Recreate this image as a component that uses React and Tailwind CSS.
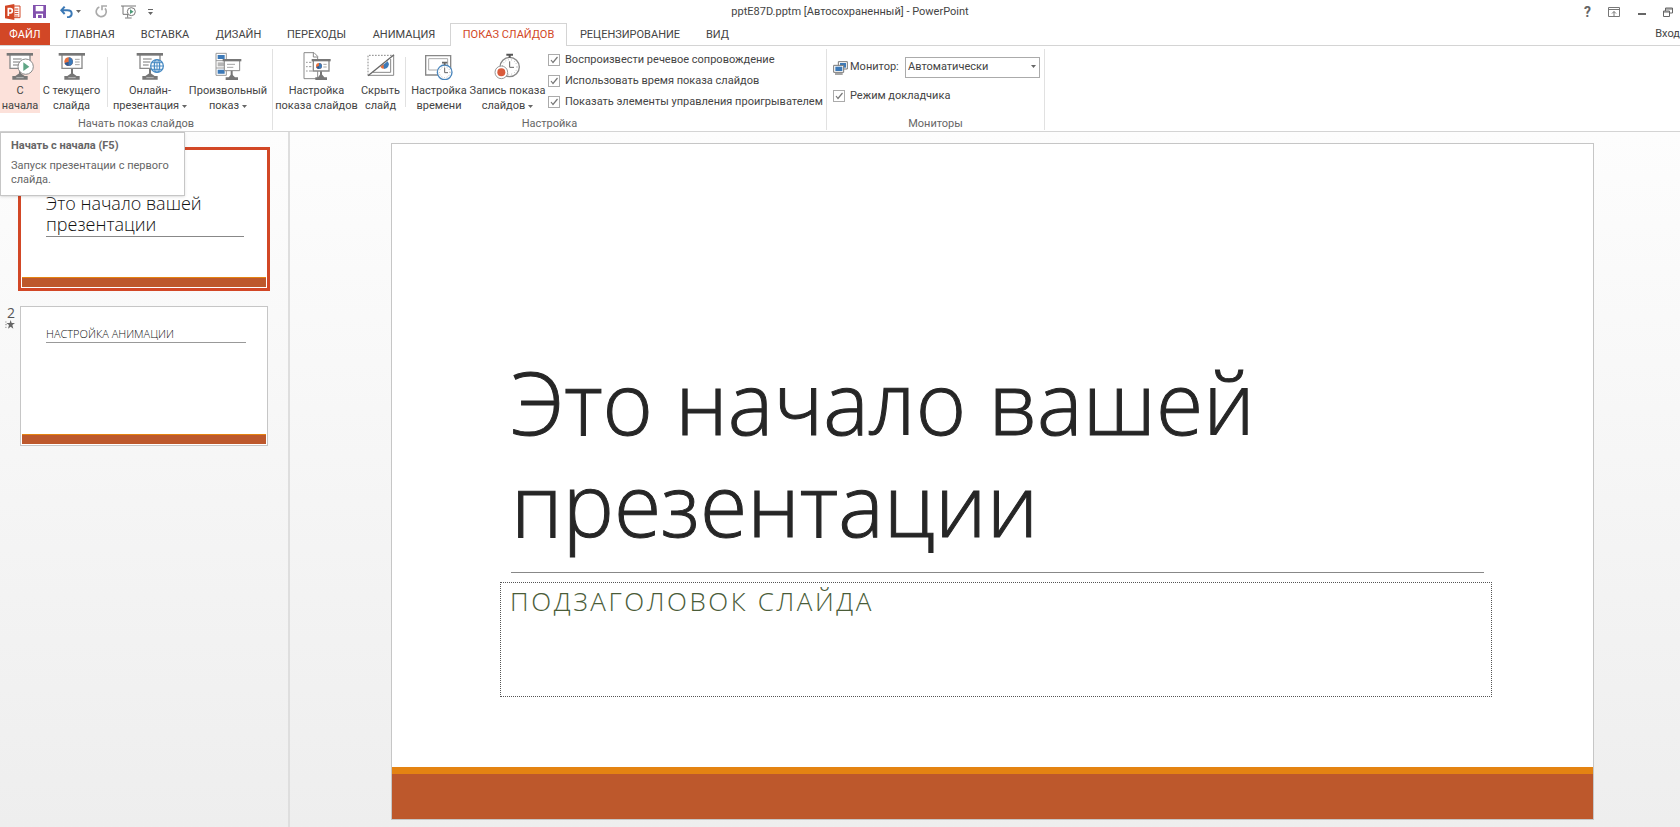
const tabs = [
  { label: "ГЛАВНАЯ", width: "w-[76px]" },
  { label: "ВСТАВКА", width: "w-[74px]" },
  { label: "ДИЗАЙН", width: "w-[73px]" },
  { label: "ПЕРЕХОДЫ", width: "w-[83px]" },
  { label: "АНИМАЦИЯ", width: "w-[92px]" },
  { label: "ПОКАЗ СЛАЙДОВ", width: "w-[117px]", active: true },
  { label: "РЕЦЕНЗИРОВАНИЕ", width: "w-[126px]" },
  { label: "ВИД", width: "w-[49px]" },
]

const playbackOptions = [
  "Воспроизвести речевое сопровождение",
  "Использовать время показа слайдов",
  "Показать элементы управления проигрывателем",
]

function Icon({ children }) {
  return (
    <svg viewBox="0 0 84 84" className="size-7 shrink-0" fill="none" aria-hidden="true">
      {children}
    </svg>
  )
}

// Projector screen on a stand
function Screen() {
  return (
    <>
      <path d="M42 50V72" stroke="#777" strokeWidth="6" />
      <path d="M42 62L56 72H65V83H19V72H28Z" fill="#777" />
      <path d="M31 77H53" stroke="#ddd" strokeWidth="2" />
      <path d="M12 9V49H72V9" fill="#fff" stroke="#8a8a8a" strokeWidth="4" />
      <path d="M2 3H81V11H2Z" fill="#777" />
    </>
  )
}

function TextLines() {
  return <path d="M21 21H47M21 30H43M21 39H38" stroke="#a5a5a5" strokeWidth="4" />
}

function PieChart({ x, y, r }) {
  return (
    <g transform={`translate(${x} ${y}) scale(${r})`}>
      <circle r="1" fill="#e8703a" />
      <path d="M0 0V-1A1 1 0 0 1 0 1Z" fill="#3d7ab8" />
      <path d="M0 0V1A1 1 0 0 1 -.95 .3Z" fill="#2a5b96" />
    </g>
  )
}

function FromStartIcon() {
  return (
    <Icon>
      <Screen />
      <TextLines />
      <circle cx="59" cy="44" r="23" fill="#fff" stroke="#8a8a8a" strokeWidth="3" />
      <path d="M52 31L70 44L52 57Z" fill="#5fa585" />
    </Icon>
  )
}

function FromCurrentIcon() {
  return (
    <Icon>
      <Screen />
      <PieChart x={32} y={29} r={13} />
      <path d="M51 22H65M51 30H65M51 38H65" stroke="#a5a5a5" strokeWidth="3" />
    </Icon>
  )
}

function OnlineIcon() {
  return (
    <Icon>
      <Screen />
      <TextLines />
      <g fill="#fff" stroke="#4a8cc4" strokeWidth="4">
        <circle cx="63" cy="42" r="19" />
        <ellipse cx="63" cy="42" rx="8" ry="19" />
        <path d="M44 42H82M63 23V61M48 32H78M48 52H78" strokeWidth="3" />
      </g>
    </Icon>
  )
}

function CustomShowIcon() {
  return (
    <Icon>
      <path d="M6 4H37V70H6Z" fill="#fff" stroke="#999" strokeWidth="3" />
      <path d="M6 26H37M6 48H37" stroke="#999" strokeWidth="3" />
      <path d="M11 9H32V21H11ZM11 53H32V65H11Z" fill="#3d7ab8" />
      <path d="M11 31H32V43H11Z" fill="#b5b5b5" />
      <path d="M53 54V78" stroke="#777" strokeWidth="6" />
      <path d="M53 66L63 76H72V84H35V76H44Z" fill="#777" />
      <path d="M31 26V56H77V26" fill="#fff" stroke="#8a8a8a" strokeWidth="3" />
      <path d="M26 21H82V28H26Z" fill="#777" />
      <path d="M39 37H63M39 46H58" stroke="#a5a5a5" strokeWidth="3" />
    </Icon>
  )
}

function SetupIcon() {
  return (
    <Icon>
      <path d="M3 2H33L44 13V80H3Z" fill="#fff" stroke="#8a8a8a" strokeWidth="3" />
      <path d="M31 2V15H44" stroke="#8a8a8a" strokeWidth="3" />
      <path d="M9 31H14M9 44H14M9 57H14M18 31H25M18 44H25M18 57H29" stroke="#999" strokeWidth="3" />
      <path d="M54 56V76" stroke="#777" strokeWidth="6" />
      <path d="M54 64L64 76H72V84H37V76H45Z" fill="#777" />
      <path d="M31 26V57H78V26" fill="#fff" stroke="#8a8a8a" strokeWidth="4" />
      <path d="M26 21H83V28H26Z" fill="#777" />
      <PieChart x={48} y={42} r={9} />
      <path d="M61 37H71M61 45H71" stroke="#a5a5a5" strokeWidth="3" />
    </Icon>
  )
}

function HideSlideIcon() {
  return (
    <Icon>
      <path d="M3 70V10H78" stroke="#888" strokeWidth="3" strokeDasharray="5 4" />
      <path d="M80 10V70H4" stroke="#888" strokeWidth="3" />
      <path d="M71 21V61H18" stroke="#888" strokeWidth="3" />
      <path d="M44 42L62 28A14 14 0 0 1 52 51Z" fill="#3d7ab8" />
      <path d="M40 44L50 37V51Q43 50 40 44Z" fill="#e8703a" />
      <path d="M3 71L81 8" stroke="#666" strokeWidth="4" />
    </Icon>
  )
}

function TimingIcon() {
  return (
    <Icon>
      <path d="M2 11H77V69H2Z" fill="#fff" stroke="#888" strokeWidth="4" />
      <path d="M11 20H68V54H11Z" stroke="#aaa" strokeWidth="3" />
      <circle cx="59" cy="61" r="22" fill="#fff" stroke="#4a86bd" strokeWidth="4" />
      <circle cx="59" cy="61" r="16" stroke="#999" strokeWidth="3" strokeDasharray="2 6" />
      <path d="M59 47V62H69" stroke="#666" strokeWidth="3" />
      <path d="M51 32H67M59 32V40" stroke="#666" strokeWidth="5" />
    </Icon>
  )
}

function RecordIcon() {
  return (
    <Icon>
      <circle cx="47" cy="45" r="29" fill="#fff" stroke="#888" strokeWidth="4" />
      <circle cx="47" cy="45" r="22" stroke="#999" strokeWidth="3" strokeDasharray="2 7" />
      <path d="M47 28V46H60" stroke="#666" strokeWidth="3" />
      <path d="M37 8H57M47 8V17" stroke="#555" strokeWidth="6" />
      <circle cx="22" cy="61" r="19" fill="#fff" stroke="#999" strokeWidth="3" />
      <circle cx="22" cy="61" r="12" fill="#d95b3c" />
    </Icon>
  )
}

function Caret() {
  return (
    <svg viewBox="0 0 5 3" className="ml-[3px] inline-block h-[3px] w-[5px] align-middle" aria-hidden="true">
      <path d="M0 0H5L2.5 3Z" fill="#666" />
    </svg>
  )
}

function RibbonButton({ icon, lines, width, menu, active }) {
  return (
    <button
      type="button"
      className={`flex h-16 shrink-0 flex-col items-center whitespace-nowrap pt-[3px] text-center text-[11px] leading-[15px] ${width} ${active ? "bg-[#fce1da]" : ""}`}
    >
      {icon}
      <span className="mt-[3px]">
        {lines[0]}
        <br />
        {lines[1]}
        {menu && <Caret />}
      </span>
    </button>
  )
}

function Separator() {
  return <div className="mx-1 mt-2 h-[50px] w-px shrink-0 bg-[#e1e1e1]" />
}

function RibbonGroup({ title, width, children }) {
  return (
    <section className={`flex shrink-0 flex-col border-r border-[#e1e1e1] ${width}`}>
      <div className="flex h-16">{children}</div>
      <h2 className="mt-1 text-center text-[11px] leading-[13px] text-[#666]">{title}</h2>
    </section>
  )
}

function CheckBox({ label }) {
  return (
    <label className="flex items-center gap-[5px] whitespace-nowrap text-[11px] leading-[21px]">
      <span className="grid">
        <input
          type="checkbox"
          defaultChecked
          className="peer col-start-1 row-start-1 size-3 appearance-none border border-[#ababab] bg-white"
        />
        <svg viewBox="0 0 12 12" className="pointer-events-none invisible col-start-1 row-start-1 size-3 peer-checked:visible" aria-hidden="true">
          <path d="M3 6L5 8.5L9.5 3" fill="none" stroke="#777" strokeWidth="1.2" />
        </svg>
      </span>
      {label}
    </label>
  )
}

function TitleBar() {
  return (
    <header className="flex h-[23px] items-center">
      <div className="flex w-40 shrink-0 items-center pl-[5px]">
        <svg viewBox="0 0 48 48" className="size-4" aria-hidden="true">
          <path d="M26 6H45V41H26Z" fill="#fff" stroke="#d24726" strokeWidth="3" />
          <path d="M29 15H40M29 22H40M29 29H40M29 36H40" stroke="#d24726" strokeWidth="3" />
          <path d="M0 5L28 0V48L0 43Z" fill="#d24726" />
          <path d="M10 36V14H16Q22 14 22 20T16 27H10" fill="none" stroke="#fff" strokeWidth="5" />
        </svg>
        <button type="button" aria-label="Сохранить" className="ml-3">
          <svg viewBox="0 0 39 39" className="size-[13px]">
            <path d="M0 0H39V39H0Z" fill="#8251ad" />
            <path d="M8 3H31V19H8ZM9 26H30V39H26V30H15V39H9Z" fill="#fff" />
          </svg>
        </button>
        <button type="button" aria-label="Отменить" className="ml-[14px] flex items-center">
          <svg viewBox="0 0 39 36" className="h-3 w-[13px]" fill="none" stroke="#3b78b5" strokeWidth="6">
            <path d="M14 2L4 13L14 24M4 13H22Q35 13 35 23T21 34" />
          </svg>
          <Caret />
        </button>
        <button type="button" aria-label="Повторить" className="ml-[14px]">
          <svg viewBox="0 0 39 39" className="size-[13px]" fill="none" stroke="#aaa" strokeWidth="5">
            <path d="M13 6A15 15 0 1 0 30 10M21 16V3H36" />
          </svg>
        </button>
        <button type="button" aria-label="Показ слайдов с начала" className="ml-[13px]">
          <svg viewBox="0 0 45 42" className="h-[14px] w-[15px]" fill="none">
            <path d="M0 3H45M6 3V28H22M20 28V38M12 39H32" stroke="#777" strokeWidth="3" />
            <circle cx="31" cy="20" r="12" fill="#fff" stroke="#777" strokeWidth="3" />
            <path d="M27 13L38 20L27 27Z" fill="#4c9a78" />
          </svg>
        </button>
        <button type="button" aria-label="Настройка панели" className="ml-3">
          <svg viewBox="0 0 5 6" className="h-[6px] w-[5px]">
            <path d="M0 0H5V1H0ZM0 3H5L2.5 6Z" fill="#666" />
          </svg>
        </button>
      </div>
      <h1 className="min-w-0 flex-1 truncate text-center text-[11px] leading-4">
        pptE87D.pptm [Автосохраненный] - PowerPoint
      </h1>
      <div className="flex w-[140px] shrink-0 items-center justify-between pl-11 pr-[7px] text-[#666]">
        <button type="button" className="text-sm font-bold leading-4">?</button>
        <button type="button" aria-label="Параметры ленты">
          <svg viewBox="0 0 12 10" className="h-[10px] w-3" fill="none" stroke="#777">
            <path d="M.5 .5H11.5V9.5H.5ZM.5 2.5H11.5M6 9V4.5M4 6.5L6 4.5L8 6.5" />
          </svg>
        </button>
        <button type="button" aria-label="Свернуть">
          <svg viewBox="0 0 8 8" className="size-2"><path d="M0 5H8V7H0Z" fill="#666" /></svg>
        </button>
        <button type="button" aria-label="Восстановить">
          <svg viewBox="0 0 10 10" className="size-[10px]" fill="none" stroke="#666">
            <path d="M.5 4H6.5V9.5H.5ZM.5 5H6.5M2.5 4V1H9.5V6H7M2.5 2H9.5" />
          </svg>
        </button>
      </div>
    </header>
  )
}

function Tabs() {
  return (
    <nav className="flex h-[23px] items-stretch border-b border-[#d4d4d4] text-[11px] leading-[22px]">
      <button type="button" className="w-[50px] shrink-0 bg-[#d24726] pt-px text-center text-white">ФАЙЛ</button>
      <div className="ml-[2px] flex flex-1">
        {tabs.map((tab) => (
          <button
            key={tab.label}
            type="button"
            className={`shrink-0 whitespace-nowrap text-center ${tab.width} ${tab.active ? "-mb-px border border-b-0 border-[#d4d4d4] bg-white text-[#d24726]" : "pt-px"}`}
          >
            {tab.label}
          </button>
        ))}
      </div>
      <a href="#login">Вход</a>
    </nav>
  )
}

function Ribbon() {
  return (
    <div className="flex border-b border-[#d4d4d4] pb-px pt-[3px]">
      <RibbonGroup title="Начать показ слайдов" width="w-[273px]">
        <RibbonButton active width="w-10" icon={<FromStartIcon />} lines={["С", "начала"]} />
        <RibbonButton width="w-[63px]" icon={<FromCurrentIcon />} lines={["С текущего", "слайда"]} />
        <Separator />
        <RibbonButton menu width="w-[76px]" icon={<OnlineIcon />} lines={["Онлайн-", "презентация"]} />
        <RibbonButton menu width="w-[80px]" icon={<CustomShowIcon />} lines={["Произвольный", "показ"]} />
      </RibbonGroup>
      <RibbonGroup title="Настройка" width="w-[554px]">
        <RibbonButton width="w-[87px]" icon={<SetupIcon />} lines={["Настройка", "показа слайдов"]} />
        <RibbonButton width="w-[41px]" icon={<HideSlideIcon />} lines={["Скрыть", "слайд"]} />
        <Separator />
        <RibbonButton width="w-[58px]" icon={<TimingIcon />} lines={["Настройка", "времени"]} />
        <RibbonButton menu width="w-[79px]" icon={<RecordIcon />} lines={["Запись показа", "слайдов"]} />
        <div className="ml-[1px]">
          {playbackOptions.map((option) => (
            <CheckBox key={option} label={option} />
          ))}
        </div>
      </RibbonGroup>
      <RibbonGroup title="Мониторы" width="w-[218px]">
        <div className="flex flex-1 flex-col gap-[7px] pl-[6px] pr-1 pt-2">
          <div className="flex items-center text-[11px]">
            <svg viewBox="0 0 45 42" className="h-[14px] w-[15px] shrink-0" fill="none" aria-hidden="true">
              <path d="M16 2H43V24H16Z" fill="#fff" stroke="#777" strokeWidth="3" />
              <path d="M21 6H39V20H21Z" fill="#3d7ab8" />
              <path d="M2 13H32V34H2Z" fill="#fff" stroke="#777" strokeWidth="3" />
              <path d="M7 17H28V30H7Z" fill="#3d7ab8" />
              <path d="M6 39H29" stroke="#777" strokeWidth="4" />
            </svg>
            <label htmlFor="monitor" className="ml-[2px] w-[55px]">Монитор:</label>
            <div className="relative flex-1">
              <select id="monitor" className="block h-[21px] w-full appearance-none border border-[#ababab] bg-white pl-[2px] text-[11px]">
                <option>Автоматически</option>
              </select>
              <span className="pointer-events-none absolute right-1 top-0 leading-[18px]">
                <Caret />
              </span>
            </div>
          </div>
          <CheckBox label="Режим докладчика" />
        </div>
      </RibbonGroup>
    </div>
  )
}

function SlidePane() {
  return (
    <aside className="w-[290px] shrink-0 border-r-2 border-[#dedede] pt-[15px] font-['Open_Sans','Noto_Sans',sans-serif]">
      <div className="flex pl-[18px]">
        <button type="button" className="flex h-[144px] w-[252px] flex-col border-3 border-[#d24726] bg-white p-px text-left font-light">
          <span className="mt-[42px] w-full pl-6 text-lg leading-[21px] text-[#111]">
            Это начало вашей
            <br />
            презентации
          </span>
          <span className="ml-6 mr-[22px] mt-px h-px self-stretch bg-[#888]" />
          <span className="mt-auto h-[10px] self-stretch border-t border-[#e48312] bg-[#bd582c]" />
        </button>
      </div>
      <div className="mt-[15px] flex">
        <div className="flex w-5 flex-col items-end pr-[5px] text-[#555]">
          <span className="text-sm leading-[14px]">2</span>
          <svg viewBox="0 0 30 27" className="h-[9px] w-[10px]" aria-hidden="true">
            <path d="M17 0L20 9H30L22 15L25 26L17 20L9 26L12 15L4 9H14Z" fill="#666" />
            <path d="M0 6H5M0 14H6M0 22H5" stroke="#888" strokeWidth="2" />
          </svg>
        </div>
        <button type="button" className="flex h-[140px] w-[248px] flex-col border border-[#c6c6c6] bg-white p-px text-left">
          <span className="mt-[18px] w-full pl-6 text-[11px] font-light leading-4 text-[#111]">НАСТРОЙКА АНИМАЦИИ</span>
          <span className="ml-6 mr-5 h-px self-stretch bg-[#999]" />
          <span className="mt-auto h-[10px] self-stretch border-t border-[#e48312] bg-[#bd582c]" />
        </button>
      </div>
    </aside>
  )
}

function SlideEditor() {
  return (
    <main className="flex-1 pb-2 pl-[101px] pr-[86px] pt-[11px] font-['Open_Sans','Noto_Sans',sans-serif]">
      <article className="flex aspect-video flex-col border border-[#c6c6c6] bg-white">
        <div className="flex flex-1 flex-col justify-end pb-[70px] pl-[108px] pr-[101px]">
          <h2 className="pl-[11px] text-[86px] font-light leading-[102px] text-[#262626] [-webkit-text-stroke:1px_#262626]">
            Это начало вашей
            <br />
            презентации
          </h2>
          <hr className="ml-[11px] mr-2 mt-[17px] border-[#888]" />
          <div className="mt-[9px] h-[115px] border border-dotted border-[#555] pl-[9px]">
            <p className="text-[26px] font-light leading-[36px] tracking-widest text-[#4a5c38]">ПОДЗАГОЛОВОК СЛАЙДА</p>
          </div>
        </div>
        <div className="h-[52px] border-t-[7px] border-[#e48312] bg-[#bd582c]" />
      </article>
    </main>
  )
}

function App() {
  return (
    <div className="flex min-h-screen flex-col overflow-hidden bg-white font-[Roboto,'Noto_Sans',sans-serif] text-[#444]">
      <TitleBar />
      <Tabs />
      <Ribbon />
      <div className="relative flex flex-1 bg-linear-to-b from-[#fdfdfd] to-[#eeeeee]">
        <SlidePane />
        <SlideEditor />
        <div role="tooltip" className="absolute left-0 top-0 w-[185px] border border-[#c6c6c6] bg-white px-[10px] pb-2 pt-[5px] text-[11px] leading-[14px] text-[#666] shadow-sm">
          <p className="font-bold leading-4">Начать с начала (F5)</p>
          <p className="mt-[5px]">Запуск презентации с первого слайда.</p>
        </div>
      </div>
    </div>
  )
}

export default App
